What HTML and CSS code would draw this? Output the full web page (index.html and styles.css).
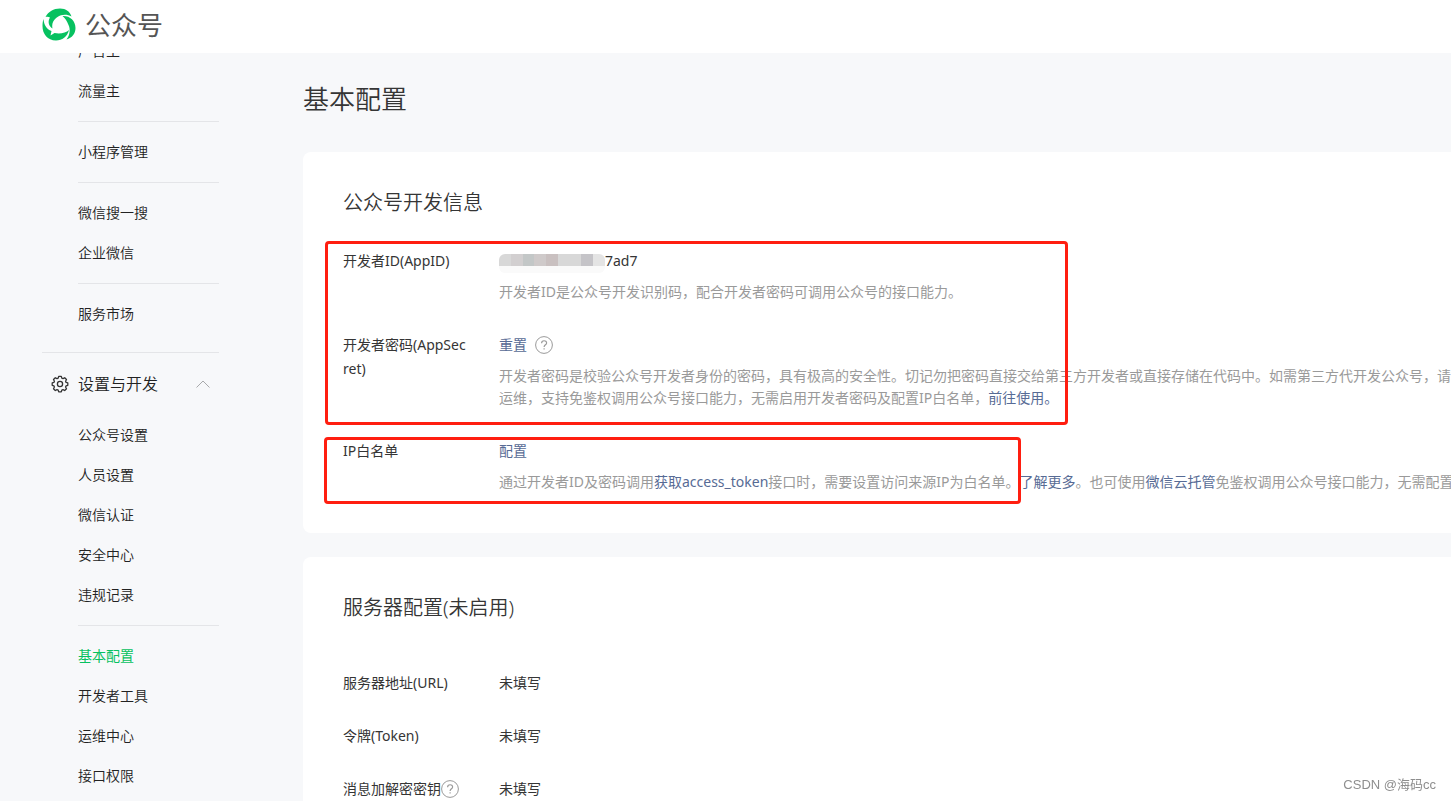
FILE: index.html
```html
<!DOCTYPE html>
<html lang="zh-CN">
<head>
<meta charset="utf-8">
<title>公众号 - 基本配置</title>
<link rel="stylesheet" href="styles.css">
</head>
<body>
<header class="topbar">
  <a class="brand" href="#">
    <svg class="brand-logo" viewBox="0 0 34 34" aria-hidden="true">
      <g fill="#07c160">
        <path d="M3.500 9C6.500 3.500 11.500 .5 18 .5C24 .5 28 3.500 29.500 8.500C25.500 6 19.500 6 15.500 9C11.500 11.500 9.500 15.500 10.500 20.500C6.500 18 5.500 13.500 8 9.500C6.500 8.500 5 8.500 3.500 9Z"/>
        <path d="M20.500 8C27.500 7.500 33.500 12.500 33.500 20C33.500 25.500 30 30 24.500 31.500C28 27 28.500 21 26.500 17C25 13 23 10 20.500 8Z"/>
        <path d="M1.500 11C2 17 4.500 21 9.500 23L8.500 27.500L12.500 25C18 26 24 25 27 22C25.500 28.500 20 32.500 14 32.500C5.500 32.500 .5 26 .5 18C.5 15 .8 13 1.500 11Z"/>
      </g>
    </svg>
    <span class="brand-name">公众号</span>
  </a>
</header>
<div class="layout">
  <nav class="sidebar">
    <ul class="menu">
      <li><a href="#">广告主</a></li>
      <li><a href="#">流量主</a></li>
    </ul>
    <ul class="menu"><li><a href="#">小程序管理</a></li></ul>
    <ul class="menu">
      <li><a href="#">微信搜一搜</a></li>
      <li><a href="#">企业微信</a></li>
    </ul>
    <ul class="menu"><li><a href="#">服务市场</a></li></ul>
    <button class="group" type="button">
      <svg class="gear" viewBox="0 0 18 18" fill="none" stroke="#333" aria-hidden="true">
        <path stroke-width="1.300" stroke-linejoin="round" d="M7.700 1.300h2.600l.5 1.800 1.200.5 1.700-.9 1.800 1.800-.9 1.700.5 1.200 1.700.5v2.400l-1.700.5-.5 1.200.9 1.700-1.800 1.800-1.700-.9-1.200.5-.5 1.800H7.700l-.5-1.800-1.200-.5-1.700.9-1.800-1.800.9-1.700-.5-1.200-1.700-.5V7.900l1.700-.5.5-1.200-.9-1.700 1.800-1.800 1.700.9 1.200-.5z"/>
        <circle cx="9" cy="9" r="2.600" stroke-width="1.300"/>
      </svg>
      <span class="group-name">设置与开发</span>
      <svg class="chevron" viewBox="0 0 14 8" fill="none" stroke="#a8a9ab" aria-hidden="true"><path d="M.5 7.500 7 1l6.500 6.500"/></svg>
    </button>
    <ul class="menu">
      <li><a href="#">公众号设置</a></li>
      <li><a href="#">人员设置</a></li>
      <li><a href="#">微信认证</a></li>
      <li><a href="#">安全中心</a></li>
      <li><a href="#">违规记录</a></li>
    </ul>
    <ul class="menu">
      <li><a class="current" href="#" aria-current="page">基本配置</a></li>
      <li><a href="#">开发者工具</a></li>
      <li><a href="#">运维中心</a></li>
      <li><a href="#">接口权限</a></li>
    </ul>
  </nav>
  <main class="content">
    <h1>基本配置</h1>
    <section class="card">
      <h2>公众号开发信息</h2>
      <dl class="rows">
        <div class="row">
          <dt>开发者ID(AppID)</dt>
          <dd>
            <div class="value"><span class="mask"><i></i><i></i><i></i><i></i><i></i><i></i><i></i><i></i><i></i></span>7ad7</div>
            <p>开发者ID是公众号开发识别码，配合开发者密码可调用公众号的接口能力。</p>
          </dd>
        </div>
        <div class="row">
          <dt>开发者密码(AppSecret)</dt>
          <dd>
            <div class="value"><a href="#">重置</a><button class="help spaced" type="button" aria-label="帮助"><svg viewBox="0 0 18 18" fill="none" stroke="#9a9a9a" aria-hidden="true"><circle cx="9" cy="9" r="8.400"/><path stroke-width="1.200" d="M6.600 7.200C6.600 4 11.600 4 11.600 7c0 1.800-2.500 1.900-2.500 4M9.100 12.200v1.400"/></svg></button></div>
            <p>开发者密码是校验公众号开发者身份的密码，具有极高的安全性。切记勿把密码直接交给第三方开发者或直接存储在代码中。如需第三方代开发公众号，请<br>运维，支持免鉴权调用公众号接口能力，无需启用开发者密码及配置IP白名单，<a href="#">前往使用。</a></p>
          </dd>
        </div>
        <div class="row">
          <dt>IP白名单</dt>
          <dd>
            <div class="value"><a href="#">配置</a></div>
            <p>通过开发者ID及密码调用<a href="#">获取access_token</a>接口时，需要设置访问来源IP为白名单。<a href="#">了解更多</a>。也可使用<a href="#">微信云托管</a>免鉴权调用公众号接口能力，无需配置</p>
          </dd>
        </div>
      </dl>
      <div class="mark mark-keys"></div>
      <div class="mark mark-ip"></div>
    </section>
    <section class="card server">
      <h2>服务器配置(未启用)</h2>
      <dl class="rows">
        <div class="row"><dt>服务器地址(URL)</dt><dd>未填写</dd></div>
        <div class="row"><dt>令牌(Token)</dt><dd>未填写</dd></div>
        <div class="row"><dt class="with-help">消息加解密密钥<button class="help" type="button" aria-label="帮助"><svg viewBox="0 0 18 18" fill="none" stroke="#9a9a9a" aria-hidden="true"><circle cx="9" cy="9" r="8.400"/><path stroke-width="1.200" d="M6.600 7.200C6.600 4 11.600 4 11.600 7c0 1.800-2.500 1.900-2.500 4M9.100 12.200v1.400"/></svg></button></dt><dd>未填写</dd></div>
      </dl>
    </section>
  </main>
</div>
<div class="credit">CSDN @海码cc</div>
</body>
</html>
```
FILE: styles.css
```css
* { box-sizing: border-box; }

body {
  margin: 0;
  height: 100vh;
  display: flex;
  flex-direction: column;
  overflow: hidden;
  background: #f7f8fa;
  color: #353535;
  font: 400 14px/24px "Noto Sans", "Noto Sans CJK SC", sans-serif;
}

ul, dl, dd, p, h1, h2 { margin: 0; padding: 0; }
ul { list-style: none; }
a { color: #576b95; text-decoration: none; }
button { border: 0; padding: 0; background: none; font: inherit; color: inherit; cursor: pointer; }

.topbar {
  flex: none;
  display: flex;
  align-items: center;
  height: 53px;
  padding: 0 42px 3px;
  background: #fff;
}
.brand { display: flex; align-items: center; gap: 9px; color: #555; }
.brand-logo { width: 34px; height: 34px; }
.brand-name { font-size: 26px; line-height: 32px; }

.layout { flex: 1; display: flex; min-height: 0; overflow: hidden; }

.sidebar { flex: none; width: 177px; margin: -22px 0 0 42px; font-weight: 350; }
.menu { margin-left: 36px; }
.menu + .menu { margin-top: 10px; padding-top: 10px; border-top: 1px solid #e4e5e8; }
.menu a { display: block; line-height: 40px; color: #222; }
.menu a.current { color: #07c160; font-weight: 400; }

.group {
  display: flex;
  align-items: center;
  width: 100%;
  margin: 18px 0 11px;
  padding: 11px 9px 0;
  border-top: 1px solid #e4e5e8;
  color: #222;
  font-size: 16px;
  line-height: 40px;
}
.gear { width: 18px; height: 18px; margin-right: 9px; }
.chevron { width: 14px; height: 8px; margin-left: auto; }

.content { flex: 1; min-width: 0; padding: 26px 0 0 84px; }
h1, h2 { font-weight: 350; line-height: 40px; }
h1 { font-size: 26px; margin-bottom: 33px; }
h2 { font-size: 20px; margin-bottom: 26px; }

.card {
  position: relative;
  margin-bottom: 24px;
  padding: 31px 0 40px 40px;
  background: #fff;
  border-radius: 8px 0 0 8px;
}
.rows { display: flex; flex-direction: column; gap: 30px; }
.row { display: flex; }
dt { flex: none; width: 156px; padding-right: 29px; line-height: 24px; word-break: break-all; }
dd { flex: 1; min-width: 0; white-space: nowrap; overflow: hidden; }
.value { display: flex; align-items: center; height: 24px; }
.row p { margin-top: 8px; line-height: 22px; color: #9a9a9a; }

.mask {
  display: flex;
  align-self: flex-end;
  width: 106px;
  height: 19px;
  border-bottom: 7px solid #fafafa;
  border-radius: 6px;
  overflow: hidden;
}
.mask i { flex: 1; background: #d8d8d8; }
.mask i:nth-child(2) { background: #d2cfd0; }
.mask i:nth-child(3) { background: #c3c7c7; }
.mask i:nth-child(4) { background: #cfcaca; }
.mask i:nth-child(5) { background: #c9c0c0; }
.mask i:nth-child(8) { background: #c5c4c8; }
.mask i:nth-child(9) { background: #e4e4e4; }

.help { flex: none; width: 18px; height: 18px; }
.help svg { display: block; width: 18px; height: 18px; }
.spaced { margin-left: 8px; }

.server h2 { margin-bottom: 43px; }
.server .rows { gap: 29px; }
.with-help { display: flex; align-items: center; }

.mark { position: absolute; border: 3px solid #ff1e10; border-radius: 4px; pointer-events: none; }
.mark-keys { left: 22px; top: 89px; width: 743px; height: 184px; }
.mark-ip { left: 21px; top: 285px; width: 697px; height: 67px; }

.credit {
  position: fixed;
  right: 15px;
  bottom: 4px;
  color: #8e8e8e;
  font-family: "Liberation Sans", "Noto Sans CJK SC", sans-serif;
  font-size: 13px;
}
```
